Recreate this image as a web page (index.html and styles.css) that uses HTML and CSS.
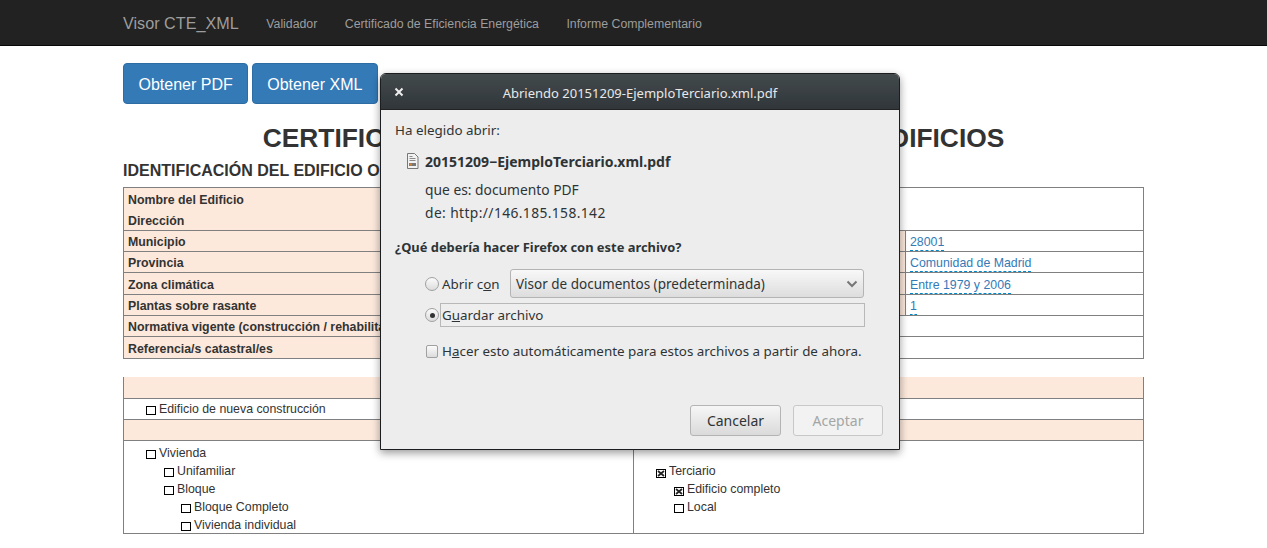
FILE: index.html
```html
<!DOCTYPE html>
<html lang="es">
<head>
<meta charset="utf-8">
<title>Visor CTE_XML</title>
<link rel="stylesheet" href="styles.css">
</head>
<body>
<nav class="navbar">
  <a class="brand">Visor CTE_XML</a>
  <a class="nav-link">Validador</a>
  <a class="nav-link">Certificado de Eficiencia Energética</a>
  <a class="nav-link">Informe Complementario</a>
</nav>
<main class="container">
  <div class="actions">
    <a class="btn">Obtener PDF</a>
    <a class="btn">Obtener XML</a>
  </div>
  <h1 class="title">CERTIFICADO DE EFICIENCIA ENERGÉTICA DE EDIFICIOS</h1>
  <h2 class="subtitle">IDENTIFICACIÓN DEL EDIFICIO O DE LA PARTE QUE SE CERTIFICA:</h2>
  <table class="data">
    <colgroup><col class="c1"><col class="c2"><col class="c3"><col class="c4"></colgroup>
    <tr class="tall"><th><div>Nombre del Edificio</div><div class="second">Dirección</div></th><td colspan="3"></td></tr>
    <tr><th>Municipio</th><td></td><th></th><td><a class="val">28001</a></td></tr>
    <tr><th>Provincia</th><td></td><th></th><td><a class="val">Comunidad de Madrid</a></td></tr>
    <tr class="r22"><th>Zona climática</th><td></td><th></th><td><a class="val">Entre 1979 y 2006</a></td></tr>
    <tr><th>Plantas sobre rasante</th><td></td><th></th><td><a class="val">1</a></td></tr>
    <tr><th>Normativa vigente (construcción / rehabilitación)</th><td colspan="3"></td></tr>
    <tr class="r22"><th>Referencia/s catastral/es</th><td colspan="3"></td></tr>
  </table>
  <div class="scope">
    <div class="band first"></div>
    <div class="line"><span class="chk"></span>Edificio de nueva construcción</div>
    <div class="band"></div>
    <div class="split">
      <div class="col">
        <div class="i1"><span class="chk"></span>Vivienda</div>
        <div class="i2"><span class="chk"></span>Unifamiliar</div>
        <div class="i2"><span class="chk"></span>Bloque</div>
        <div class="i3"><span class="chk"></span>Bloque Completo</div>
        <div class="i3"><span class="chk"></span>Vivienda individual</div>
      </div>
      <div class="col">
        <div class="i1">&nbsp;</div>
        <div class="i1"><span class="chk on"><svg viewBox="0 0 8 7" width="8" height="7"><path d="M1 1l6 5M7 1L1 6" stroke="#222" stroke-width="1.7"/></svg></span>Terciario</div>
        <div class="i2"><span class="chk on"><svg viewBox="0 0 8 7" width="8" height="7"><path d="M1 1l6 5M7 1L1 6" stroke="#222" stroke-width="1.7"/></svg></span>Edificio completo</div>
        <div class="i2"><span class="chk"></span>Local</div>
      </div>
    </div>
  </div>
</main>
<section class="dialog">
  <header class="dlg-head">
    <svg class="dlg-x" viewBox="0 0 10 10" width="10" height="10"><path d="M1.5 1.5l7 7M8.5 1.5l-7 7" stroke="#eee" stroke-width="2"/></svg>
    <span>Abriendo 20151209-EjemploTerciario.xml.pdf</span>
  </header>
  <div class="dlg-body">
    <p class="intro">Ha elegido abrir:</p>
    <div class="file">
      <svg viewBox="0 0 13 16" width="13" height="16"><path d="M1.5.5h7l3.500 3.500v11.500h-10.500z" fill="#f2f2f2" stroke="#777"/><path d="M3.500 3.500h3M3.500 5.500h6M3.500 7.500h6" stroke="#8a8a8a"/><path d="M3 10h7v3H3z" fill="#777"/><path d="M3.500 10.500h2.500v2H3.500z" fill="#d9822b"/></svg>
      <strong>20151209−EjemploTerciario.xml.pdf</strong>
    </div>
    <p class="meta">que es: documento PDF</p>
    <p class="meta url">de: http://146.185.158.142</p>
    <p class="question">¿Qué debería hacer Firefox con este archivo?</p>
    <div class="opt opt-open">
      <span class="radio"></span>
      <span class="opt-label">Abrir c<u>o</u>n</span>
      <div class="select"><span>Visor de documentos (predeterminada)</span>
        <svg viewBox="0 0 12 8" width="12" height="8"><path d="M1.500 1.500L6 6l4.500-4.500" fill="none" stroke="#777" stroke-width="2"/></svg>
      </div>
    </div>
    <div class="opt opt-save">
      <span class="radio on"></span>
      <div class="savebox">G<u>u</u>ardar archivo</div>
    </div>
    <div class="opt opt-auto">
      <span class="check"></span>
      <span>H<u>a</u>cer esto automáticamente para estos archivos a partir de ahora.</span>
    </div>
    <div class="dlg-actions">
      <button class="dbtn">Cancelar</button>
      <button class="dbtn off">Aceptar</button>
    </div>
  </div>
</section>
</body>
</html>
```

FILE: styles.css
```css
* { box-sizing: border-box; }
html, body { margin: 0; padding: 0; }
body {
  font-family: "Liberation Sans", Arial, sans-serif;
  font-size: 12.35px;
  color: #333;
  background: #fff;
  height: 548px;
  overflow: hidden;
}
.navbar {
  height: 46px;
  background: #222;
  border-bottom: 1px solid #080808;
  padding: 2px 0 0 123px;
  display: flex;
  align-items: center;
  color: #9d9d9d;
}
.brand { font-size: 16.2px; margin-right: 27.5px; }
.nav-link { font-size: 12.3px; margin-right: 27.5px; }
.container { width: 1021px; margin-left: 123px; padding-top: 17px; }
.actions { display: flex; gap: 3.5px; }
.btn {
  height: 41px;
  padding: 2px 14.5px 0;
  background: #337ab7;
  border: 1px solid #2e6da4;
  border-radius: 4px;
  color: #fff;
  font-size: 16px;
  display: flex;
  align-items: center;
  justify-content: center;
}
.title {
  margin: 19px 0 0;
  font-size: 26.35px;
  line-height: 30px;
  text-align: center;
  font-weight: 700;
  color: #333;
}
.subtitle {
  margin: 8px 0 0;
  font-size: 16px;
  line-height: 20px;
  font-weight: 700;
  color: #333;
}
.data {
  margin-top: 6px;
  width: 1021px;
  table-layout: fixed;
  border-collapse: collapse;
}
.c1 { width: 300px; }
.c2 { width: 300px; }
.c3 { width: 182px; }
.data th, .data td {
  border: 1px solid #808080;
  padding: 0 4px;
  height: 21px;
  line-height: 19px;
  font-size: 12.35px;
  overflow: hidden;
  white-space: nowrap;
  text-align: left;
  vertical-align: top;
}
.data th { background: #fde9dc; padding-top: 2px; line-height: 18px; }
.data .r22 th, .data .r22 td { height: 22px; padding-top: 1px; }
.data .r22 th { padding-top: 3px; }
.data .tall th { height: 42px; padding-top: 2px; }
.tall th div { line-height: 20px; height: 20px; }
.tall th .second { line-height: 22px; }
.val {
  display: inline-block;
  height: 20px;
  line-height: 23px;
  vertical-align: top;
  color: #337ab7;
  border-bottom: 1px dashed #08c;
}
.scope {
  margin-top: 18px;
  border: 1px solid #808080;
  border-top: 0;
}
.band { height: 21px; background: #fde9dc; border-bottom: 1px solid #808080; }
.band.first { height: 22px; }
.line { height: 21px; line-height: 21px; padding-left: 22px; border-bottom: 1px solid #808080; }
.split { display: grid; grid-template-columns: 509px 1fr; }
.col { padding: 3px 0 0; height: 92px; line-height: 18px; }
.col + .col { border-left: 1px solid #808080; }
.i1 { padding-left: 22px; }
.i2 { padding-left: 40px; }
.i3 { padding-left: 57px; }
.chk {
  display: inline-flex;
  align-items: center;
  justify-content: center;
  width: 10px;
  height: 9px;
  border: 1px solid #000;
  margin-right: 3px;
  vertical-align: -2px;
  background: #fff;
}
.chk svg { display: block; flex: none; }
.dialog {
  position: absolute;
  left: 380px;
  top: 73px;
  width: 520px;
  height: 377px;
  background: #ededed;
  border: 1px solid #1b1d1e;
  border-radius: 6px 6px 0 0;
  box-shadow: 0 3px 8px rgba(0,0,0,.4);
  font-family: "Noto Sans", "Open Sans", sans-serif;
  font-size: 13.4px;
  color: #2e3436;
  display: flex;
  flex-direction: column;
}
.dlg-head {
  height: 36px;
  flex: none;
  padding-top: 2px;
  display: flex;
  align-items: center;
  justify-content: center;
  background: linear-gradient(#434a4c, #30363a);
  color: #e8e8e8;
  border-radius: 5px 5px 0 0;
  border-bottom: 1px solid #222;
  position: relative;
  font-size: 13px;
}
.dlg-x { position: absolute; left: 13px; top: 13px; }
.dlg-body { padding: 11px 14px 13px; flex: 1; display: flex; flex-direction: column; }
.dlg-body p { margin: 0; }
.intro { line-height: 18px; }
.file { display: flex; align-items: center; gap: 6px; margin: 12px 0 0 11px; height: 20px; font-size: 14px; }
.file strong { font-weight: 700; }
.dlg-body .meta { margin-left: 30px; line-height: 23px; font-size: 13.8px; }
.dlg-body .file + .meta { margin-top: 7px; }
.dlg-body .url { letter-spacing: .4px; }
.dlg-body .question { margin-top: 13px; font-weight: 700; font-size: 12.9px; line-height: 20px; }
.opt { display: flex; align-items: center; margin-left: 30px; }
.opt-open { margin-top: 12px; height: 29px; }
.opt-save { margin-top: 5px; height: 24px; }
.opt-auto { margin-top: 15px; margin-left: 31px; gap: 4px; height: 18px; }
.radio {
  flex: none;
  width: 14px;
  height: 14px;
  border: 1px solid #a0a0a0;
  border-radius: 50%;
  background: linear-gradient(#fbfbfb, #dcdcdc);
  margin-right: 3px;
  display: flex;
  align-items: center;
  justify-content: center;
}
.opt-save .radio { margin-right: 1px; }
.radio.on::after { content: ""; width: 5px; height: 5px; border-radius: 50%; background: #333; }
.opt-label { width: 68px; }
.select {
  width: 354px;
  height: 29px;
  border: 1px solid #b4b4b4;
  border-radius: 3px;
  background: linear-gradient(#f8f8f8, #dddddd);
  display: flex;
  align-items: center;
  justify-content: space-between;
  padding: 0 5px;
  font-size: 13.500px;
}
.savebox {
  width: 425px;
  height: 24px;
  line-height: 22px;
  border: 1px solid #b8b8b8;
  padding-left: 1px;
  background: #eee;
}
.check {
  flex: none;
  width: 12px;
  height: 13px;
  border: 1px solid #a0a0a0;
  border-radius: 2px;
  background: linear-gradient(#fbfbfb, #dcdcdc);
}
.dlg-actions { margin-top: auto; display: flex; justify-content: flex-end; gap: 12px; margin-right: 2px; }
.dbtn {
  width: 91px;
  height: 31px;
  border: 1px solid #b4b4b4;
  border-radius: 3px;
  background: linear-gradient(#f6f6f6, #dadada);
  font: inherit;
  font-size: 14px;
  color: #2e3436;
  padding: 0;
}
.dbtn.off { width: 90px; background: #f2f2f2; color: #a4a6a6; border-color: #c8c8c8; }
```
